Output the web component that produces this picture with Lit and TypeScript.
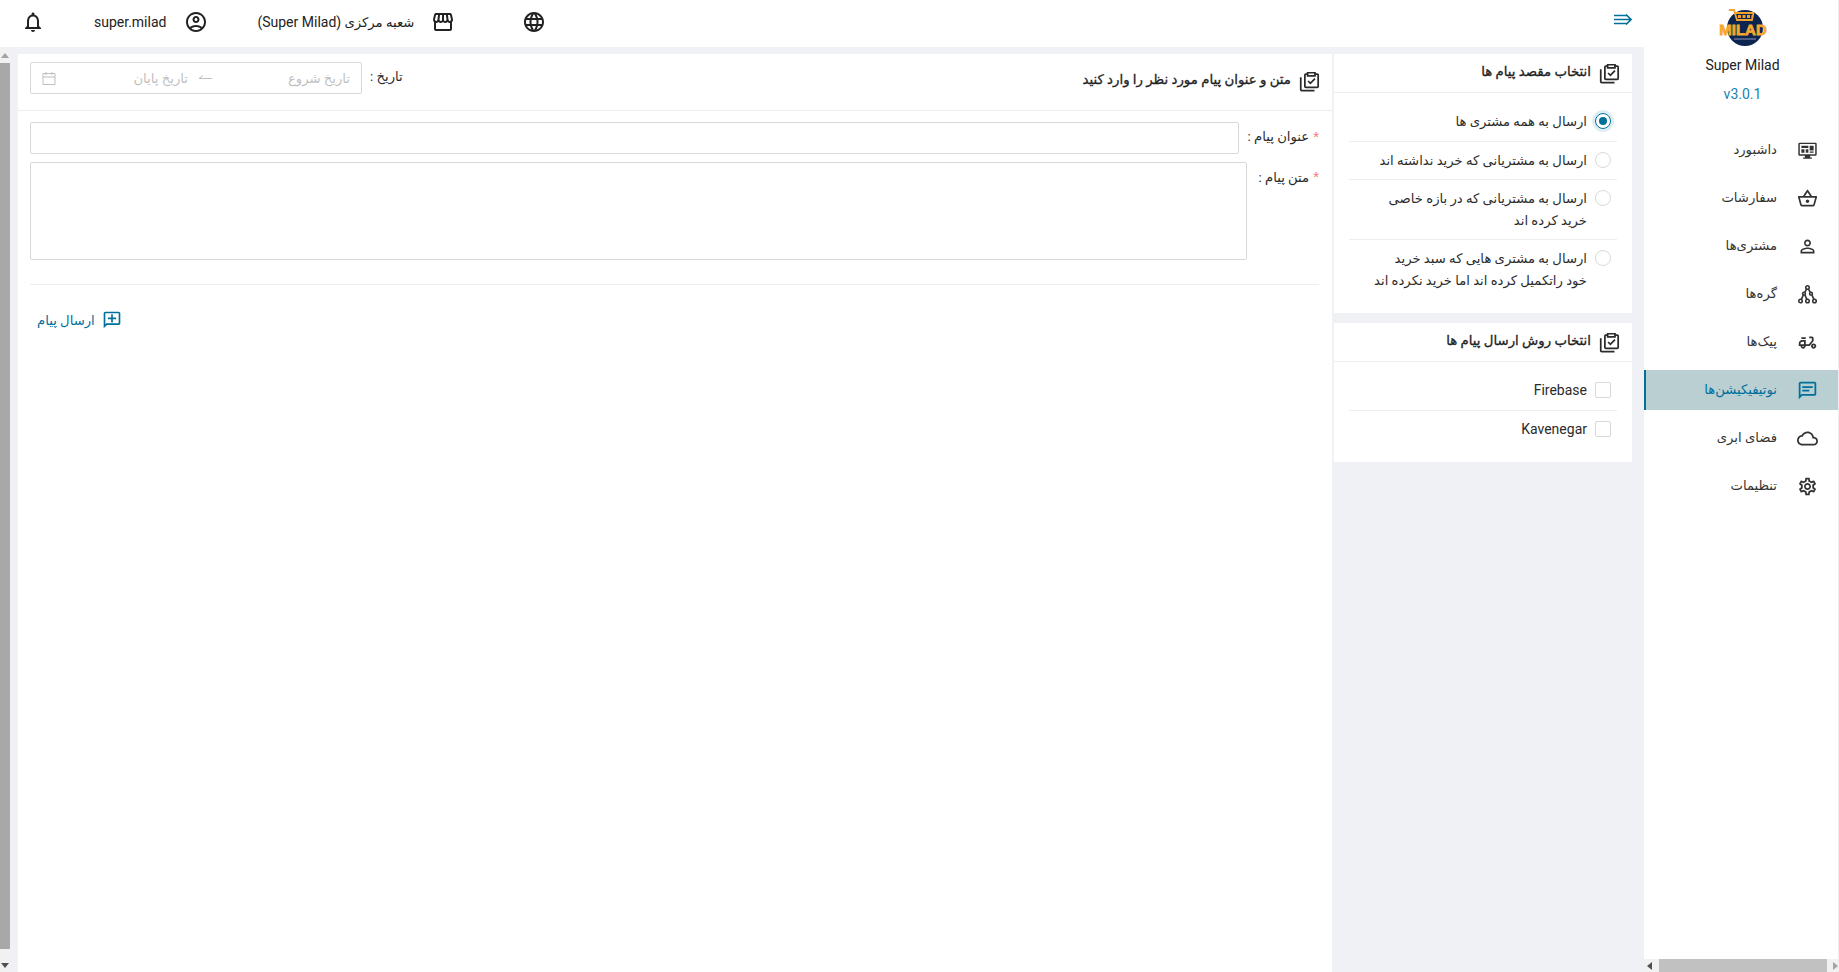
import { LitElement, html, css } from "lit";
import { customElement } from "lit/decorators.js";

const P = {
  basket: "M22 9h-4.79l-4.38-6.56c-.19-.28-.51-.42-.83-.42s-.64.14-.83.43L6.79 9H2c-.55 0-1 .45-1 1 0 .09.01.18.04.27l2.54 9.27c.23.84 1 1.46 1.92 1.46h13c.92 0 1.69-.62 1.93-1.46l2.54-9.27L23 10c0-.55-.45-1-1-1zM12 4.8L14.8 9H9.2L12 4.8zM18.5 19l-12.99.01L3.31 11H20.7l-2.2 8zM12 13c-1.1 0-2 .9-2 2s.9 2 2 2 2-.9 2-2-.9-2-2-2z",
  person: "M12 5.9c1.16 0 2.1.94 2.1 2.1s-.94 2.1-2.1 2.1S9.9 9.16 9.9 8s.94-2.1 2.1-2.1m0 9c2.97 0 6.1 1.46 6.1 2.1v1.1H5.9V17c0-.64 3.13-2.1 6.1-2.1M12 4C9.79 4 8 5.79 8 8s1.79 4 4 4 4-1.79 4-4-1.79-4-4-4zm0 9c-2.67 0-8 1.34-8 4v3h16v-3c0-2.66-5.33-4-8-4z",
  moped: "M19 7c0-1.1-.9-2-2-2h-3v2h3v2.65L13.52 14H10V9H6c-2.21 0-4 1.79-4 4v3h2c0 1.66 1.34 3 3 3s3-1.34 3-3h4.48L19 10.35V7zM4 14v-1c0-1.1.9-2 2-2h2v3H4zm3 3c-.55 0-1-.45-1-1h2c0 .55-.45 1-1 1zM5 6h5v2H5zM19 13c-1.66 0-3 1.34-3 3s1.34 3 3 3 3-1.34 3-3-1.34-3-3-3zm0 4c-.55 0-1-.45-1-1s.45-1 1-1 1 .45 1 1-.45 1-1 1z",
  chat: "M4 4h16v12H5.17L4 17.17V4m0-2c-1.1 0-1.99.9-1.99 2L2 22l4-4h14c1.1 0 2-.9 2-2V4c0-1.1-.9-2-2-2H4zm2 9h8v2H6v-2zm0-4h12v2H6V7z",
  cloud: "M12 6c2.62 0 4.88 1.86 5.39 4.43l.3 1.5 1.53.11c1.56.1 2.78 1.41 2.78 2.96 0 1.65-1.35 3-3 3H6c-2.21 0-4-1.79-4-4 0-2.05 1.53-3.76 3.56-3.97l1.07-.11.5-.95C8.08 7.14 9.94 6 12 6m0-2C9.11 4 6.6 5.64 5.35 8.04 2.34 8.36 0 10.91 0 14c0 3.31 2.69 6 6 6h13c2.76 0 5-2.24 5-5 0-2.64-2.05-4.78-4.65-4.96C18.67 6.59 15.64 4 12 4z",
  gear: "M19.43 12.98c.04-.32.07-.64.07-.98 0-.34-.03-.66-.07-.98l2.11-1.65c.19-.15.24-.42.12-.64l-2-3.46c-.09-.16-.26-.25-.44-.25-.06 0-.12.01-.17.03l-2.49 1c-.52-.4-1.08-.73-1.69-.98l-.38-2.65C14.46 2.18 14.25 2 14 2h-4c-.25 0-.46.18-.49.42l-.38 2.65c-.61.25-1.17.59-1.69.98l-2.49-1c-.06-.02-.12-.03-.18-.03-.17 0-.34.09-.43.25l-2 3.46c-.13.22-.07.49.12.64l2.11 1.65c-.04.32-.07.65-.07.98 0 .33.03.66.07.98l-2.11 1.65c-.19.15-.24.42-.12.64l2 3.46c.09.16.26.25.44.25.06 0 .12-.01.17-.03l2.49-1c.52.4 1.08.73 1.69.98l.38 2.65c.03.24.24.42.49.42h4c.25 0 .46-.18.49-.42l.38-2.65c.61-.25 1.17-.59 1.69-.98l2.49 1c.06.02.12.03.18.03.17 0 .34-.09.43-.25l2-3.46c.12-.22.07-.49-.12-.64l-2.11-1.65zm-1.98-1.71c.04.31.05.52.05.73 0 .21-.02.43-.05.73l-.14 1.13.89.7 1.08.84-.7 1.21-1.27-.51-1.04-.42-.9.68c-.43.32-.84.56-1.25.73l-1.06.43-.16 1.13-.2 1.35h-1.4l-.19-1.35-.16-1.13-1.06-.43c-.43-.18-.83-.41-1.23-.71l-.91-.7-1.06.43-1.27.51-.7-1.21 1.08-.84.89-.7-.14-1.13c-.03-.31-.05-.54-.05-.74s.02-.43.05-.73l.14-1.13-.89-.7-1.08-.84.7-1.21 1.27.51 1.04.42.9-.68c.43-.32.84-.56 1.25-.73l1.06-.43.16-1.13.2-1.35h1.39l.19 1.35.16 1.13 1.06.43c.43.18.83.41 1.23.71l.91.7 1.06-.43 1.27-.51.7 1.21-1.07.85-.89.7.14 1.13zM12 8c-2.21 0-4 1.79-4 4s1.79 4 4 4 4-1.79 4-4-1.79-4-4-4zm0 6c-1.1 0-2-.9-2-2s.9-2 2-2 2 .9 2 2-.9 2-2 2z",
  bell: "M12 22c1.1 0 2-.9 2-2h-4c0 1.1.9 2 2 2zm6-6v-5c0-3.07-1.63-5.64-4.5-6.32V4c0-.83-.67-1.5-1.5-1.5s-1.5.67-1.5 1.5v.68C7.64 5.36 6 7.92 6 11v5l-2 2v1h16v-1l-2-2zm-2 1H8v-6c0-2.48 1.51-4.5 4-4.5s4 2.02 4 4.5v6z",
  account: "M12 2C6.48 2 2 6.48 2 12s4.48 10 10 10 10-4.48 10-10S17.52 2 12 2zM7.35 18.5C8.66 17.56 10.26 17 12 17s3.34.56 4.65 1.5c-1.31.94-2.91 1.5-4.65 1.5s-3.34-.56-4.65-1.5zm10.79-1.38C16.45 15.8 14.32 15 12 15s-4.45.8-6.14 2.12C4.7 15.73 4 13.95 4 12c0-4.42 3.58-8 8-8s8 3.58 8 8c0 1.95-.7 3.73-1.86 5.12zM12 6c-1.93 0-3.5 1.57-3.5 3.5S10.07 13 12 13s3.5-1.57 3.5-3.5S13.93 6 12 6zm0 5c-.83 0-1.5-.67-1.5-1.5S11.17 8 12 8s1.5.67 1.5 1.5S12.83 11 12 11z",
  store: "M21.9 8.89l-1.05-4.37c-.22-.9-1-1.52-1.91-1.52H5.05c-.9 0-1.69.63-1.9 1.52L2.1 8.89c-.24 1.02-.02 2.06.62 2.88.08.11.19.19.28.29V19c0 1.1.9 2 2 2h14c1.1 0 2-.9 2-2v-6.94c.09-.09.2-.18.28-.28.64-.82.87-1.87.62-2.89zm-2.99-3.9l1.05 4.37c.1.42.01.84-.25 1.17-.14.18-.44.47-.94.47-.61 0-1.14-.49-1.21-1.14L16.98 5l1.93-.01zM13 5h1.96l.54 4.52c.05.39-.07.78-.33 1.07-.22.26-.54.41-.95.41-.67 0-1.22-.59-1.22-1.31V5zM8.49 9.52L9.04 5H11v4.69c0 .72-.55 1.31-1.29 1.31-.34 0-.65-.15-.89-.41-.25-.29-.37-.68-.33-1.07zm-4.45-.16L5.05 5h1.97l-.58 4.86c-.08.65-.6 1.14-1.21 1.14-.49 0-.8-.29-.93-.47-.27-.32-.36-.75-.26-1.17zM5 19v-6.03c.08.01.15.03.23.03.87 0 1.66-.36 2.24-.95.6.6 1.4.95 2.31.95.87 0 1.65-.36 2.23-.93.59.57 1.39.93 2.29.93.84 0 1.64-.35 2.24-.95.58.59 1.37.95 2.24.95.08 0 .15-.02.23-.03V19H5z",
  globe: "M11.99 2C6.47 2 2 6.48 2 12s4.47 10 9.99 10C17.52 22 22 17.52 22 12S17.52 2 11.99 2zm6.93 6h-2.95c-.32-1.25-.78-2.45-1.38-3.56 1.84.63 3.37 1.91 4.33 3.56zM12 4.04c.83 1.2 1.48 2.53 1.91 3.96h-3.82c.43-1.43 1.08-2.76 1.91-3.96zM4.26 14C4.1 13.36 4 12.69 4 12s.1-1.36.26-2h3.38c-.08.66-.14 1.32-.14 2 0 .68.06 1.34.14 2H4.26zm.82 2h2.95c.32 1.25.78 2.45 1.38 3.56-1.84-.63-3.37-1.9-4.33-3.56zm2.95-8H5.08c.96-1.66 2.49-2.93 4.33-3.56C8.81 5.55 8.35 6.75 8.03 8zM12 19.96c-.83-1.2-1.48-2.53-1.91-3.96h3.82c-.43 1.43-1.08 2.76-1.91 3.96zM14.34 14H9.66c-.09-.66-.16-1.32-.16-2 0-.68.07-1.35.16-2h4.68c.09.65.16 1.32.16 2 0 .68-.07 1.34-.16 2zm.25 5.56c.6-1.11 1.06-2.31 1.38-3.56h2.95c-.96 1.65-2.49 2.93-4.33 3.56zM16.36 14c.08-.66.14-1.32.14-2 0-.68-.06-1.34-.14-2h3.38c.16.64.26 1.31.26 2s-.1 1.36-.26 2h-3.38z",
  addc: "M2 4c0-1.1.9-2 2-2h16c1.1 0 2 .9 2 2v12c0 1.1-.9 2-2 2H6l-4 4V4zm2 13.17L5.17 16H20V4H4v13.17zM11 5h2v4h4v2h-4v4h-2v-4H7V9h4z",
};

const icon = (d: string, size = 21) =>
  html`<svg class="ic" width=${size} height=${size} viewBox="0 0 24 24" fill="currentColor"><path d=${d}></path></svg>`;

const dashIcon = html`<svg class="ic" width="21" height="21" viewBox="0 0 24 24" fill="none">
  <path fill="currentColor" fill-rule="evenodd" d="M3 3h18a1.5 1.5 0 0 1 1.5 1.5v12A1.5 1.5 0 0 1 21 18h-6v2h2v1.5H7V20h2v-2H3a1.5 1.5 0 0 1-1.5-1.5v-12A1.5 1.5 0 0 1 3 3zm.2 1.7v11.6h17.6V4.7zM5 6.5h8V9H5zm9.5 0H19V12h-4.500zM5 10.500h3.500V14.500H5zM10 10.500h3V14.500h-3zM14.500 13H19v1.500h-4.500z"/>
</svg>`;

const treeIcon = html`<svg class="ic" width="21" height="21" viewBox="0 0 24 24" fill="none" stroke="currentColor" stroke-width="1.800">
  <circle cx="12" cy="4" r="2"/><circle cx="8" cy="11" r="1.600"/><circle cx="16" cy="11" r="1.600"/>
  <circle cx="4" cy="19.500" r="2"/><circle cx="12" cy="19.500" r="2"/><circle cx="20" cy="19.500" r="2"/>
  <path d="M11 5.800 8.800 9.500M13 5.800l2.200 3.700M7.300 12.500 5 17.500M9 12.500l2.300 5M17 12.500l2.300 5"/>
</svg>`;

const clip = html`<svg class="ic" width="22" height="22" viewBox="0 0 24 24" fill="none" stroke="currentColor" stroke-width="1.900">
  <path d="M10.500 4.500H8.500a1 1 0 0 0-1 1V18a1 1 0 0 0 1 1H21a1 1 0 0 0 1-1V5.500a1 1 0 0 0-1-1h-2M10.500 3h8v3.500h-8z" />
  <path d="M11 12l2.500 2.500L18.500 9.500" />
  <path d="M3 8v13.500a1 1 0 0 0 1 1h14" />
</svg>`;

const logo = html`<svg class="logo" width="48" height="40" viewBox="0 0 48 40">
  <circle cx="26" cy="20" r="18" fill="#0d2350"/>
  <path d="M10 2h5l3 10h15l1.500-7H16" fill="none" stroke="#f2a32c" stroke-width="1.800"/>
  <path d="M19 8.500h14" stroke="#f2a32c" stroke-width="3" stroke-dasharray="3 1.500"/>
  <text x="24" y="27" text-anchor="middle" font-family="'Liberation Sans', sans-serif" font-weight="700" font-size="15" fill="#f7a72d" stroke="#f7a72d" stroke-width=".8" direction="ltr">MILAD</text>
  <path d="M15 31h22" stroke="#8f99b5" stroke-width="1"/>
</svg>`;

const NAV: [string, any, boolean?][] = [
  ["داشبورد", dashIcon],
  ["سفارشات", icon(P.basket)],
  ["مشتری‌ها", icon(P.person)],
  ["گره‌ها", treeIcon],
  ["پیک‌ها", icon(P.moped)],
  ["نوتیفیکیشن‌ها", icon(P.chat), true],
  ["فضای ابری", icon(P.cloud)],
  ["تنظیمات", icon(P.gear)],
];

@customElement("app-root")
export class AppRoot extends LitElement {
  static styles = css`
    :host {
      display: flex;
      direction: rtl;
      width: 100vw;
      height: 100vh;
      overflow: hidden;
      background: #eff1f5;
      color: #2b2b2b;
      font-family: Roboto, "DejaVu Sans", sans-serif;
      font-size: 13.2px;
    }
    * { box-sizing: border-box; }
    .ic { display: block; flex: none; }
    .logo { display: block; flex: none; overflow: visible; }
    .en { font-size: 14px; }

    /* sidebar */
    .side {
      width: 195px;
      flex: none;
      background: #fff;
      display: flex;
      flex-direction: column;
      border-right: 1px solid #eceef2;
    }
    .brand {
      height: 130px;
      padding: 8px 0 0 3px;
      display: flex;
      flex-direction: column;
      align-items: center;
      flex: none;
    }
    .brand .name { font-size: 14px; line-height: 20px; margin-top: 7px; color: #222; }
    .brand .ver { font-size: 14px; line-height: 20px; margin-top: 9px; color: #1b7fae; }
    .nav { flex: 1; display: flex; flex-direction: column; gap: 8px; }
    .item {
      height: 40px;
      display: flex;
      align-items: center;
      gap: 20px;
      padding-right: 20px;
      color: #333;
    }
    .item span { padding-bottom: 2px; }
    .item.on {
      background: #b9cfd2;
      color: #00709a;
      border-left: 2px solid #00709a;
    }
    .hbar {
      height: 13px;
      flex: none;
      background: #f1f1f1;
      display: flex;
      align-items: center;
      justify-content: space-between;
      direction: ltr;
      padding: 0 0 0 3px;
    }
    .hthumb { width: 168px; height: 100%; background: #c1c1c1; }
    .tri { width: 0; height: 0; border-style: solid; flex: none; }
    .tri.l { border-width: 4px 5px 4px 0; border-color: transparent #505050 transparent transparent; }
    .tri.r { border-width: 4px 0 4px 5px; border-color: transparent transparent transparent #a3a3a3; }
    .tri.u { border-width: 0 4px 5px 4px; border-color: transparent transparent #a3a3a3 transparent; }
    .tri.d { border-width: 5px 4px 0 4px; border-color: #505050 transparent transparent transparent; }

    /* main */
    .main { flex: 1; min-width: 0; display: flex; flex-direction: column; }
    .top {
      height: 47px;
      flex: none;
      background: #fff;
      display: flex;
      align-items: center;
      justify-content: space-between;
      padding: 0 12px 3px 21px;
      color: #222;
    }
    .burger { color: #00709a; margin-bottom: 5px; }
    .tools { display: flex; align-items: center; }
    .tools .t { display: flex; align-items: center; gap: 17px; }
    .tools .t + .t { margin-right: 67px; }
    .tools .t + .t + .t { margin-right: 49px; gap: 18px; }
    .tools .bell { margin-right: 49px; }

    .body { flex: 1; min-height: 0; display: flex; }
    .content { flex: 1; min-width: 0; display: flex; gap: 2px; padding: 7px 12px 0 8px; }
    .right { width: 298px; flex: none; display: flex; flex-direction: column; gap: 10px; }
    .card { background: #fff; flex: none; }
    .head-text { font-size: 13.3px; -webkit-text-stroke: 0.3px currentColor; color: #222; padding-bottom: 3px; }
    .chead {
      height: 39px;
      display: flex;
      align-items: center;
      gap: 7px;
      padding: 0 12px 0 0;
      border-bottom: 1px solid #edeef0;
    }
    .cbody { padding: 10px 15px 13px 15px; }
    .row {
      display: flex;
      gap: 8px;
      padding: 8px 6px 8px 0;
      line-height: 21.5px;
      border-bottom: 1px solid #eceef0;
    }
    .row:last-child { border-bottom-color: transparent; }
    .row .txt { max-width: 214px; }
    .mark {
      width: 16px;
      height: 16px;
      flex: none;
      border: 1px solid #d9d9d9;
      border-radius: 50%;
      margin-top: 2px;
      background: #fff;
    }
    .mark.on {
      border-color: #00709a;
      box-shadow: 0 0 0 3px rgba(0, 112, 154, .12);
      display: flex;
      align-items: center;
      justify-content: center;
    }
    .mark.on::after { content: ""; width: 8px; height: 8px; border-radius: 50%; background: #00709a; }
    .mark.box { border-radius: 2px; }

    .panel { flex: 1; min-width: 0; background: #fff; padding: 0 13px 0 12px; }
    .phead {
      height: 57px;
      margin: 0 -13px 0 -12px;
      padding: 0 12px 0 12px;
      border-bottom: 1px solid #edeef0;
      display: flex;
      justify-content: space-between;
      align-items: center;
    }
    .ptitle { display: flex; align-items: center; gap: 7px; padding-bottom: 3px; }
    .dategrp { display: flex; align-items: center; gap: 8px; padding-bottom: 8px; }
    .dlabel { padding-bottom: 4px; }
    .range {
      width: 332px;
      height: 32px;
      border: 1px solid #d9d9d9;
      border-radius: 2px;
      display: flex;
      align-items: center;
      padding: 0 11px;
      color: #bfbfbf;
      gap: 8px;
    }
    .range .a { width: 130px; flex: none; }
    .range .b { flex: 1; }
    .form { display: flex; flex-direction: column; padding-top: 11px; }
    .f { display: flex; }
    .f + .f { margin-top: 8px; }
    .flabel { display: flex; gap: 4px; flex: none; white-space: nowrap; padding-top: 4px; line-height: 22px; }
    .f1 .flabel { width: 80px; }
    .f2 .flabel { width: 72px; }
    .f2 .flabel span:last-child { padding-top: 1px; }
    .star { color: #ff7875; font-family: "Liberation Sans", sans-serif; font-size: 15px; }
    .inp { flex: 1; border: 1px solid #d9d9d9; border-radius: 2px; background: #fff; }
    .f1 .inp { height: 32px; }
    .f2 .inp { height: 98px; }
    .hr { height: 1px; background: #edeef0; margin-top: 24px; }
    .send {
      display: flex;
      align-items: center;
      justify-content: flex-end;
      gap: 7px;
      color: #00709a;
      margin-top: 25px;
      padding-left: 7px;
    }

    .vbar {
      width: 10px;
      flex: none;
      background: #f1f1f1;
      display: flex;
      flex-direction: column;
      align-items: center;
    }
    .vbtn { height: 16px; flex: none; display: flex; align-items: center; justify-content: center; }
    .vbtn.end { height: 14px; margin-top: 9px; }
    .vthumb { flex: 1; width: 100%; background: #a8a8a8; }
  `;

  private row(cls: string, text: string, en = false) {
    return html`<div class="row"><span class="mark ${cls}"></span><span class="txt ${en ? "en" : ""}">${text}</span></div>`;
  }

  render() {
    return html`
      <aside class="side">
        <div class="brand">
          ${logo}
          <div class="name" dir="ltr">Super Milad</div>
          <div class="ver" dir="ltr">v3.0.1</div>
        </div>
        <nav class="nav">
          ${NAV.map(([t, i, on]) => html`<div class="item ${on ? "on" : ""}">${i}<span>${t}</span></div>`)}
        </nav>
        <div class="hbar">
          <span class="tri l"></span><span class="hthumb"></span><span class="tri r"></span>
        </div>
      </aside>
      <div class="main">
        <header class="top">
          <svg class="burger ic" width="18" height="11" viewBox="0 0 18 11" fill="none" stroke="currentColor" stroke-width="1.600">
            <path d="M0 1.500h13M0 5.500h16.500M0 9.500h13M12 .5l5 5-5 5" />
          </svg>
          <div class="tools">
            <div class="t">${icon(P.globe, 24)}</div>
            <div class="t">${icon(P.store, 24)}<span>شعبه مرکزی <span class="en">(Super Milad)</span></span></div>
            <div class="t">${icon(P.account, 24)}<span class="en" dir="ltr">super.milad</span></div>
            <div class="bell">${icon(P.bell, 24)}</div>
          </div>
        </header>
        <div class="body">
          <div class="content">
            <div class="right">
              <section class="card">
                <div class="chead">${clip}<span class="head-text">انتخاب مقصد پیام ها</span></div>
                <div class="cbody">
                  ${this.row("on", "ارسال به همه مشتری ها")}
                  ${this.row("", "ارسال به مشتریانی که خرید نداشته اند")}
                  ${this.row("", "ارسال به مشتریانی که در بازه خاصی خرید کرده اند")}
                  ${this.row("", "ارسال به مشتری هایی که سبد خرید خود راتکمیل کرده اند اما خرید نکرده اند")}
                </div>
              </section>
              <section class="card">
                <div class="chead">${clip}<span class="head-text">انتخاب روش ارسال پیام ها</span></div>
                <div class="cbody">
                  ${this.row("box", "Firebase", true)}
                  ${this.row("box", "Kavenegar", true)}
                </div>
              </section>
            </div>
            <section class="panel">
              <div class="phead">
                <div class="ptitle">${clip}<span class="head-text">متن و عنوان پیام مورد نظر را وارد کنید</span></div>
                <div class="dategrp">
                  <span class="dlabel">تاریخ :</span>
                  <div class="range">
                    <span class="a">تاریخ شروع</span>
                    <svg class="ic" width="16" height="8" viewBox="0 0 16 8" fill="none" stroke="currentColor"><path d="M16 4.500H3M3 4.500l4-3" /></svg>
                    <span class="b">تاریخ پایان</span>
                    <svg class="ic" width="14" height="14" viewBox="0 0 14 14" fill="none" stroke="currentColor"><path d="M1 2.500h12v11H1zM1 6h12M4 1v3M10 1v3" /></svg>
                  </div>
                </div>
              </div>
              <div class="form">
                <div class="f f1">
                  <div class="flabel"><span class="star">*</span><span>عنوان پیام :</span></div>
                  <div class="inp"></div>
                </div>
                <div class="f f2">
                  <div class="flabel"><span class="star">*</span><span>متن پیام :</span></div>
                  <div class="inp"></div>
                </div>
              </div>
              <div class="hr"></div>
              <div class="send">
                ${icon(P.addc, 20)}
                <span>ارسال پیام</span>
              </div>
            </section>
          </div>
          <div class="vbar">
            <div class="vbtn"><span class="tri u"></span></div>
            <div class="vthumb"></div>
            <div class="vbtn end"><span class="tri d"></span></div>
          </div>
        </div>
      </div>
    `;
  }
}
